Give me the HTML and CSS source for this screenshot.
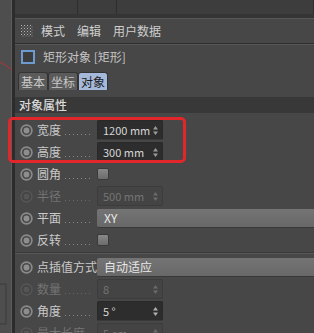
FILE: index.html
```html
<!DOCTYPE html>
<html lang="zh-CN">
<head>
    <meta charset="UTF-8">
    <meta name="viewport" content="width=device-width, initial-scale=1.0">
    <title>属性</title>
    <link rel="stylesheet" href="styles.css">
</head>
<body>
    <div class="app">
        <div class="viewport">
            <svg class="curve" width="12" height="333" viewBox="0 0 12 333">
                <path d="M0 62 C4 64 8 67 12 70" fill="none" stroke="#b0343a" stroke-width="1"/>
                <rect x="-2" y="284" width="8" height="40" fill="none" stroke="#3a3a3a"/>
            </svg>
        </div>
        <div class="panel">
            <div class="topbar">
                <div class="cell first"></div>
                <div class="cell second"></div>
                <div class="cell"></div>
            </div>
            <div class="menubar">
                <svg class="grip" width="12" height="12" viewBox="0 0 12 12">
                    <defs>
                        <pattern id="dots" width="3" height="3" patternUnits="userSpaceOnUse">
                            <rect x="0" y="0" width="1" height="1" fill="#b4b4b4"/>
                            <rect x="1.5" y="1.5" width="1" height="1" fill="#8a8a8a"/>
                        </pattern>
                    </defs>
                    <rect width="12" height="12" fill="url(#dots)"/>
                </svg>
                <span class="menu">模式</span>
                <span class="menu">编辑</span>
                <span class="menu">用户数据</span>
            </div>
            <div class="title">
                <span class="objbox"></span>
                <span>矩形对象 [矩形]</span>
            </div>
            <div class="tabs">
                <span class="tab">基本</span>
                <span class="tab">坐标</span>
                <span class="tab active">对象</span>
            </div>
            <div class="section">对象属性</div>
            <div class="props">
                <div class="row">
                    <svg class="radio" width="13" height="13" viewBox="0 0 13 13"><circle cx="6.5" cy="6.5" r="6.2" fill="#8a8a8a"/><circle cx="6.5" cy="6.5" r="4.6" fill="#4a4a4a"/><circle cx="6.5" cy="6.5" r="2.9" fill="#8e8e8e"/></svg>
                    <span class="label">宽度<i class="leader"></i></span>
                    <span class="field">1200 mm<svg class="spin" width="5" height="9" viewBox="0 0 5 9"><path d="M2.5 0L5 3.5H0z M2.5 9L0 5.5H5z" fill="#9a9a9a"/></svg></span>
                </div>
                <div class="row">
                    <svg class="radio" width="13" height="13" viewBox="0 0 13 13"><circle cx="6.5" cy="6.5" r="6.2" fill="#8a8a8a"/><circle cx="6.5" cy="6.5" r="4.6" fill="#4a4a4a"/><circle cx="6.5" cy="6.5" r="2.9" fill="#8e8e8e"/></svg>
                    <span class="label">高度<i class="leader"></i></span>
                    <span class="field">300 mm<svg class="spin" width="5" height="9" viewBox="0 0 5 9"><path d="M2.5 0L5 3.5H0z M2.5 9L0 5.5H5z" fill="#9a9a9a"/></svg></span>
                </div>
                <div class="row">
                    <svg class="radio" width="13" height="13" viewBox="0 0 13 13"><circle cx="6.5" cy="6.5" r="6.2" fill="#8a8a8a"/><circle cx="6.5" cy="6.5" r="4.6" fill="#4a4a4a"/><circle cx="6.5" cy="6.5" r="2.9" fill="#8e8e8e"/></svg>
                    <span class="label">圆角<i class="leader"></i></span>
                    <span class="check"></span>
                </div>
                <div class="row disabled">
                    <svg class="radio" width="13" height="13" viewBox="0 0 13 13"><circle cx="6.5" cy="6.5" r="6.2" fill="#555"/><circle cx="6.5" cy="6.5" r="4.6" fill="#444"/><circle cx="6.5" cy="6.5" r="2.9" fill="#555"/></svg>
                    <span class="label">半径<i class="leader"></i></span>
                    <span class="field">500 mm<svg class="spin" width="5" height="9" viewBox="0 0 5 9"><path d="M2.5 0L5 3.5H0z M2.5 9L0 5.5H5z" fill="#6a6a6a"/></svg></span>
                </div>
                <div class="row">
                    <svg class="radio" width="13" height="13" viewBox="0 0 13 13"><circle cx="6.5" cy="6.5" r="6.2" fill="#8a8a8a"/><circle cx="6.5" cy="6.5" r="4.6" fill="#4a4a4a"/><circle cx="6.5" cy="6.5" r="2.9" fill="#8e8e8e"/></svg>
                    <span class="label">平面<i class="leader"></i></span>
                    <span class="dropdown">XY</span>
                </div>
                <div class="row">
                    <svg class="radio" width="13" height="13" viewBox="0 0 13 13"><circle cx="6.5" cy="6.5" r="6.2" fill="#8a8a8a"/><circle cx="6.5" cy="6.5" r="4.6" fill="#4a4a4a"/><circle cx="6.5" cy="6.5" r="2.9" fill="#8e8e8e"/></svg>
                    <span class="label">反转<i class="leader"></i></span>
                    <span class="check"></span>
                </div>
                <div class="divider"></div>
                <div class="row">
                    <svg class="radio" width="13" height="13" viewBox="0 0 13 13"><circle cx="6.5" cy="6.5" r="6.2" fill="#8a8a8a"/><circle cx="6.5" cy="6.5" r="4.6" fill="#4a4a4a"/><circle cx="6.5" cy="6.5" r="2.9" fill="#8e8e8e"/></svg>
                    <span class="label">点插值方式</span>
                    <span class="dropdown">自动适应</span>
                </div>
                <div class="row disabled">
                    <svg class="radio" width="13" height="13" viewBox="0 0 13 13"><circle cx="6.5" cy="6.5" r="6.2" fill="#555"/><circle cx="6.5" cy="6.5" r="4.6" fill="#444"/><circle cx="6.5" cy="6.5" r="2.9" fill="#555"/></svg>
                    <span class="label">数量<i class="leader"></i></span>
                    <span class="field">8<svg class="spin" width="5" height="9" viewBox="0 0 5 9"><path d="M2.5 0L5 3.5H0z M2.5 9L0 5.5H5z" fill="#6a6a6a"/></svg></span>
                </div>
                <div class="row">
                    <svg class="radio" width="13" height="13" viewBox="0 0 13 13"><circle cx="6.5" cy="6.5" r="6.2" fill="#8a8a8a"/><circle cx="6.5" cy="6.5" r="4.6" fill="#4a4a4a"/><circle cx="6.5" cy="6.5" r="2.9" fill="#8e8e8e"/></svg>
                    <span class="label">角度<i class="leader"></i></span>
                    <span class="field">5 °<svg class="spin" width="5" height="9" viewBox="0 0 5 9"><path d="M2.5 0L5 3.5H0z M2.5 9L0 5.5H5z" fill="#b0b0b0"/></svg></span>
                </div>
                <div class="row disabled">
                    <svg class="radio" width="13" height="13" viewBox="0 0 13 13"><circle cx="6.5" cy="6.5" r="6.2" fill="#555"/><circle cx="6.5" cy="6.5" r="4.6" fill="#444"/><circle cx="6.5" cy="6.5" r="2.9" fill="#555"/></svg>
                    <span class="label">最大长度<i class="leader"></i></span>
                    <span class="field">5 cm<svg class="spin" width="5" height="9" viewBox="0 0 5 9"><path d="M2.5 0L5 3.5H0z M2.5 9L0 5.5H5z" fill="#6a6a6a"/></svg></span>
                </div>
            </div>
        </div>
    </div>
    <div class="highlight"></div>
</body>
</html>
```

FILE: styles.css
```css
body {
    margin: 0;
    width: 314px;
    height: 333px;
    overflow: hidden;
    background: #464646;
    font-family: "Noto Sans CJK SC", "Noto Sans", sans-serif;
    font-size: 12px;
    line-height: 16px;
    color: #c8c8c8;
}
.app {
    display: flex;
    height: 333px;
}
.viewport {
    width: 11px;
    flex: none;
    background: #4e4e4e;
    border-right: 1px solid #5c5c5c;
    box-shadow: 3px 0 0 #2c2c2c;
    margin-right: 3px;
}
.curve {
    display: block;
}
.panel {
    flex: 1;
    background: #474747;
}
.topbar {
    height: 14px;
    display: flex;
    background: #3d3d3d;
    border-bottom: 4px solid #353535;
}
.cell {
    border-right: 1px solid #2e2e2e;
    flex: 1;
}
.cell.first {
    flex: none;
    width: 62px;
}
.cell.second {
    flex: none;
    width: 38px;
}
.menubar {
    height: 24px;
    display: flex;
    align-items: center;
    padding-left: 6px;
    border-top: 1px solid #585858;
    border-bottom: 1px solid #2e2e2e;
    box-shadow: 0 1px 0 #575757;
}
.grip {
    margin-right: 8px;
}
.menu {
    margin-right: 12px;
    color: #cfcfcf;
}
.title {
    height: 26px;
    display: flex;
    align-items: center;
    padding-left: 6px;
    color: #c4c4c4;
}
.objbox {
    width: 10px;
    height: 10px;
    border: 2px solid #6d9bd1;
    background: #3c3c3c;
    margin-right: 8px;
}
.tabs {
    display: flex;
    margin-top: 2px;
    padding-left: 3px;
    height: 18px;
}
.tab {
    width: 28px;
    text-align: center;
    line-height: 17px;
    background: #5b5b5b;
    border: 1px solid #343434;
    border-bottom: none;
    border-radius: 3px 3px 0 0;
    color: #c8c8c8;
}
.tab.active {
    background: #a5b9da;
    color: #1c1c1c;
}
.section {
    margin-top: 7px;
    height: 16px;
    background: #383838;
    padding-left: 4px;
    color: #dadada;
    font-weight: 500;
}
.props {
    padding-top: 6px;
}
.row {
    height: 22px;
    display: flex;
    align-items: center;
    padding-left: 5px;
}
.radio {
    margin-right: 4px;
    flex: none;
}
.label {
    width: 60px;
    flex: none;
    display: flex;
    align-items: center;
    white-space: nowrap;
    color: #cacaca;
}
.leader {
    flex: 1;
    height: 1px;
    margin: 8px 4px 0 4px;
    background: repeating-linear-gradient(90deg, #8a8a8a 0 1px, transparent 1px 4px);
}
.field {
    box-sizing: border-box;
    width: 66px;
    height: 20px;
    padding: 0 4px 0 5px;
    display: flex;
    align-items: center;
    justify-content: space-between;
    white-space: nowrap;
    font-size: 11px;
    background: #2d2d2d;
    border: 1px solid #292929;
    border-bottom-color: #3a3a3a;
    border-radius: 2px;
    color: #d6d6d6;
}
.spin {
    flex: none;
}
.disabled .label,
.disabled .field {
    color: #747474;
}
.disabled .field {
    background: #444444;
    border-color: #3c3c3c;
}
.disabled .leader {
    background: repeating-linear-gradient(90deg, #666 0 1px, transparent 1px 4px);
}
.check {
    width: 10px;
    height: 10px;
    background: linear-gradient(#888, #6c6c6c);
    border: 1px solid #3a3a3a;
    border-radius: 2px;
}
.dropdown {
    flex: 1;
    height: 18px;
    padding-left: 7px;
    line-height: 18px;
    background: linear-gradient(#747474, #686868);
    border-bottom: 1px solid #383838;
    border-radius: 2px 0 0 2px;
    color: #e8e8e8;
}
.divider {
    margin: 1px 0 2px;
    border-top: 1px solid #3a3a3a;
    border-bottom: 1px solid #575757;
}
.highlight {
    position: absolute;
    left: 8px;
    top: 117px;
    width: 178px;
    height: 46px;
    box-sizing: border-box;
    border: 3px solid #e3262a;
    border-radius: 5px;
}
```
